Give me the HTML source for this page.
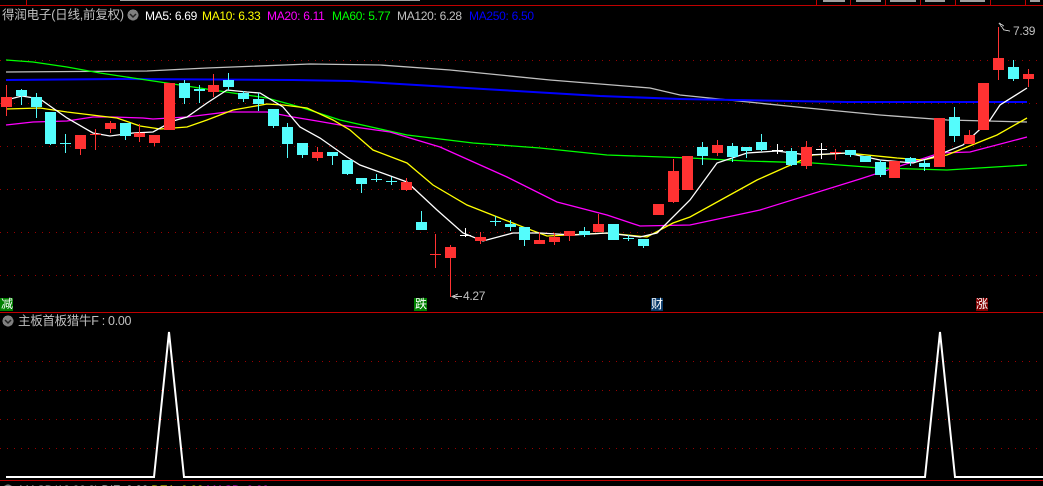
<!DOCTYPE html>
<html><head><meta charset="utf-8"><style>
html,body{margin:0;background:#000;width:1043px;height:486px;overflow:hidden;position:relative;font-family:"Liberation Sans","Noto Sans CJK SC",sans-serif}
.t{position:absolute;font-size:12px;white-space:nowrap;line-height:14px;letter-spacing:-0.3px}
</style></head><body>
<svg width="1043" height="486" style="position:absolute;left:0;top:0" shape-rendering="crispEdges">
<line x1="0" y1="5.5" x2="1043" y2="5.5" stroke="#c00000"/>
<g stroke="#c00000"><line x1="26.5" y1="0" x2="26.5" y2="5"/><line x1="816.5" y1="0" x2="816.5" y2="5"/><line x1="850.5" y1="0" x2="850.5" y2="5"/><line x1="885.5" y1="0" x2="885.5" y2="5"/><line x1="920.5" y1="0" x2="920.5" y2="5"/><line x1="955.5" y1="0" x2="955.5" y2="5"/><line x1="990.5" y1="0" x2="990.5" y2="5"/><line x1="1025.5" y1="0" x2="1025.5" y2="5"/></g>
<g fill="#a0a0a0"><rect x="823" y="0" width="22" height="2"/><rect x="856" y="0" width="25" height="2"/><rect x="890" y="0" width="26" height="2"/><rect x="925" y="0" width="20" height="2"/><rect x="960" y="0" width="25" height="2"/><rect x="1030" y="0" width="10" height="2"/><rect x="120" y="0" width="300" height="1"/></g>
<g stroke="#900" stroke-dasharray="1,6">
<line x1="0" y1="60.5" x2="1043" y2="60.5"/><line x1="0" y1="103.5" x2="1043" y2="103.5"/><line x1="0" y1="146.5" x2="1043" y2="146.5"/><line x1="0" y1="189.5" x2="1043" y2="189.5"/><line x1="0" y1="232.5" x2="1043" y2="232.5"/><line x1="0" y1="275.5" x2="1043" y2="275.5"/>
<line x1="0" y1="361.5" x2="1043" y2="361.5"/><line x1="0" y1="390.5" x2="1043" y2="390.5"/><line x1="0" y1="419.5" x2="1043" y2="419.5"/><line x1="0" y1="448.5" x2="1043" y2="448.5"/>
</g>
<line x1="0" y1="312.5" x2="1043" y2="312.5" stroke="#c00000"/>
<line x1="0" y1="480.5" x2="1043" y2="480.5" stroke="#c00000"/>
<g fill="none" stroke-width="1.3" shape-rendering="auto">
<polyline stroke="#c0c0c0" points="6,72 147,71 207,68 310,64 380,65 450,70 550,80 650,88 680,95 797,107 880,115 947,120 1027,122"/>
<polyline stroke="#0000ff" stroke-width="2" points="6,80 117,79 293,80 350,81 500,90 600,96 680,99 847,102 1027,102"/>
<polyline stroke="#00ff00" points="6,60 33,62 67,67 100,73 133,78 160,82 193,87 233,93 267,98 300,107 340,120 407,135 473,143 540,148 607,155 690,158 747,161 813,163 880,168 947,170 1027,165"/>
<polyline stroke="#ff00ff" points="6,125 33,122 67,121 93,117 113,117 143,118 153,119 187,117 227,112 267,112 293,117 317,121 340,125 390,132 440,147 507,177 557,202 607,215 640,226 690,225 760,210 860,179 940,153 970,152 1027,137"/>
<polyline stroke="#ffff00" points="6,109 40,108 67,112 100,116 117,118 140,126 160,129 187,127 207,120 233,110 267,104 283,105 307,108 333,120 350,130 373,150 407,163 433,185 467,205 500,218 523,227 547,236 607,233 647,237 673,223 690,217 757,180 813,155 847,153 897,158 923,160 947,155 997,135 1027,118"/>
<polyline stroke="#ffffff" points="6,100 22,96 40,99 67,118 93,133 110,136 133,133 153,132 173,121 187,117 207,103 227,90 247,92 260,93 283,107 300,127 320,138 347,157 360,165 407,182 437,210 463,233 483,241 513,233 540,233 573,235 607,233 640,237 657,233 690,200 717,163 747,153 777,151 807,155 847,153 880,160 913,163 933,157 963,145 990,120 1000,105 1027,88"/>
</g>
<g id="c"></g>
<polyline points="6,477 154,477 169,332 184,477 925,477 940,332 955,477 1043,477" fill="none" stroke="#fff" stroke-width="2" shape-rendering="auto"/>
<line x1="450.5" y1="258" x2="450.5" y2="297" stroke="#ff3232"/>
<polyline points="458,294 452,296.5 458,299" fill="none" stroke="#c0c0c0"/><line x1="452" y1="296.5" x2="462" y2="296.5" stroke="#c0c0c0"/>
<polyline points="1004,26 999,23 1004,30 1010,31" fill="none" stroke="#c0c0c0"/>
<rect x="0" y="298" width="13" height="13" fill="#008000"/>
<rect x="414" y="298" width="13" height="13" fill="#008000"/>
<rect x="651" y="298" width="12" height="13" fill="#0a3a6a"/>
<rect x="976" y="298" width="12" height="13" fill="#800000"/>
<circle cx="133" cy="15" r="5.5" fill="#808080"/><polyline points="130,14 133,17 136,14" fill="none" stroke="#222" stroke-width="1.5" shape-rendering="auto"/>
<circle cx="8" cy="321" r="5.5" fill="#808080"/><polyline points="5,320 8,323 11,320" fill="none" stroke="#222" stroke-width="1.5" shape-rendering="auto"/>
<circle cx="8" cy="490" r="5.5" fill="#808080"/>
</svg>
<div class="t" style="left:2px;top:8px;color:#c0c0c0;font-size:12.5px;letter-spacing:-0.2px">得润电子(日线,前复权)</div>
<div class="t" style="left:145px;top:9px;color:#fff">MA5: 6.69</div>
<div class="t" style="left:202px;top:9px;color:#ff0">MA10: 6.33</div>
<div class="t" style="left:267px;top:9px;color:#f0f">MA20: 6.11</div>
<div class="t" style="left:332px;top:9px;color:#0f0">MA60: 5.77</div>
<div class="t" style="left:397px;top:9px;color:#c0c0c0">MA120: 6.28</div>
<div class="t" style="left:469px;top:9px;color:#00f">MA250: 6.50</div>
<div class="t" style="left:18px;top:314px;color:#c0c0c0;font-size:12.5px">主板首板猎牛F : 0.00</div>
<div class="t" style="left:463px;top:289px;color:#c0c0c0">4.27</div>
<div class="t" style="left:1013px;top:24px;color:#c0c0c0">7.39</div>
<div class="t" style="left:1px;top:297px;color:#fff">减</div>
<div class="t" style="left:415px;top:297px;color:#fff">跌</div>
<div class="t" style="left:651px;top:297px;color:#fff">财</div>
<div class="t" style="left:976px;top:297px;color:#fff">涨</div>
<div class="t" style="left:19px;top:483px;color:#c0c0c0">MACD(12,26,9) <span style="color:#fff">DIF: 0.00</span> <span style="color:#ff0">DEA: 0.00</span> <span style="color:#f0f">MACD: 0.00</span></div>
<script>
var R="#ff3232",C="#54fcfc",W="#ffffff";
var d=[[1,97,107,85,116,R],[16,90,96,89,105,C],[31,97,107,93,118,C],[45,112,144,112,145,C],[60,143,143,134,153,C,1],[75,135,149,135,155,R],[90,134,134,129,150,R,1],[105,123,129,121,133,R],[120,123,136,123,140,C],[134,133,137,124,142,R],[149,135,143,135,146,R],[164,83,130,83,130,R],[179,83,98,80,104,C],[194,89,91,85,103,C],[208,85,92,74,97,R],[223,80,87,73,90,C],[238,93,99,91,102,C],[253,99,104,93,111,C],[268,109,126,109,128,C],[282,127,144,123,158,C],[297,143,155,143,158,C],[312,152,158,147,161,R],[327,152,156,152,165,C],[342,160,174,160,175,C],[356,178,184,178,193,C],[371,179,179,174,182,C,1],[386,181,181,177,185,C,1],[401,182,190,178,191,R],[416,222,230,211,230,C],[430,254,254,234,268,R,1],[445,247,258,245,258,R],[460,235,235,228,237,W,1],[475,237,241,232,244,R],[490,221,221,216,226,C,1],[505,224,227,220,231,C],[519,227,240,227,246,C],[534,240,244,232,244,R],[549,237,242,233,245,R],[564,231,236,231,241,R],[579,231,235,227,237,C],[593,224,232,214,232,R],[608,224,240,224,240,C],[623,238,238,235,241,C,1],[638,239,246,239,248,C],[653,204,215,204,215,R],[668,171,202,159,203,R],[682,156,190,156,190,R],[697,147,156,142,165,C],[712,145,153,140,156,R],[727,146,157,143,162,C],[741,147,151,147,158,C],[756,142,150,134,151,C],[772,150,150,144,154,W,1],[786,151,165,148,166,C],[801,147,166,141,169,R],[816,149,149,143,159,W,1],[830,152,152,149,160,R,1],[845,150,155,150,157,C],[860,156,162,156,162,C],[875,162,175,160,177,C],[889,161,178,161,178,R],[905,158,162,157,166,C],[919,163,167,160,171,C],[934,118,167,118,167,R],[949,117,136,107,142,C],[964,135,144,130,144,R],[978,83,130,83,130,R],[993,58,70,27,80,R],[1008,67,79,60,81,C],[1023,74,79,69,87,R]];
var s="";d.forEach(function(a){var cx=a[0]+5.5;s+='<line x1="'+cx+'" y1="'+a[3]+'" x2="'+cx+'" y2="'+a[4]+'" stroke="'+a[5]+'"/>';
if(a[6])s+='<line x1="'+a[0]+'" y1="'+(a[1]+.5)+'" x2="'+(a[0]+11)+'" y2="'+(a[1]+.5)+'" stroke="'+a[5]+'"/>';
else s+='<rect x="'+a[0]+'" y="'+a[1]+'" width="11" height="'+Math.max(1,a[2]-a[1])+'" fill="'+a[5]+'"/>';});
document.getElementById("c").innerHTML=s;
</script>
</body></html>
